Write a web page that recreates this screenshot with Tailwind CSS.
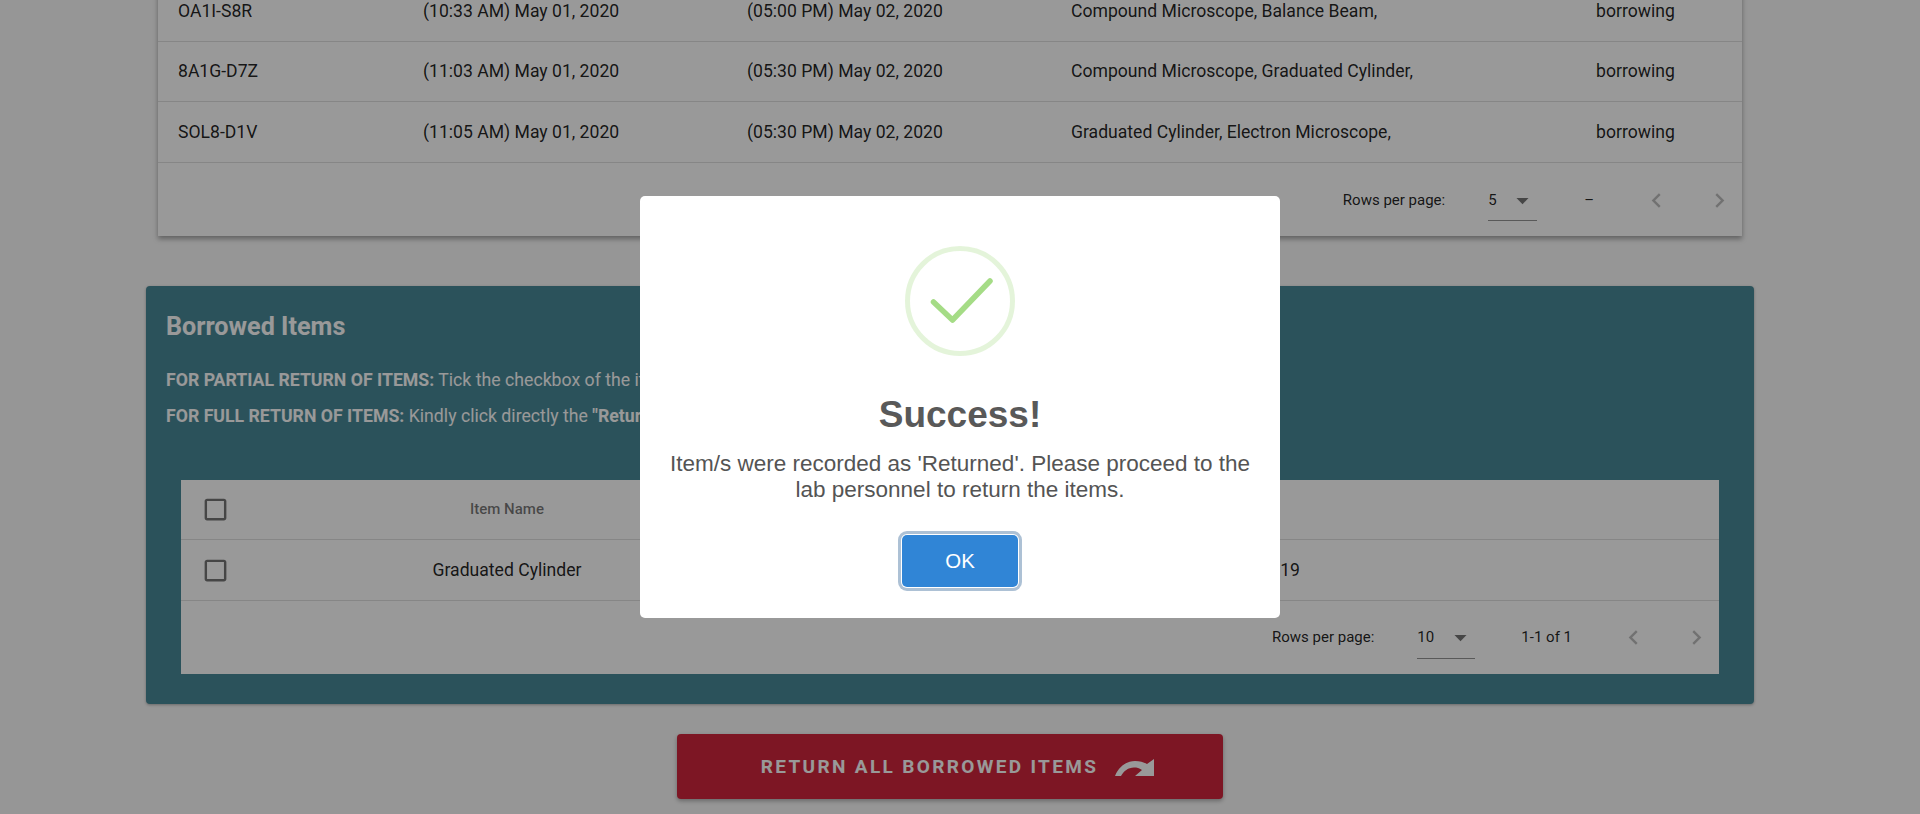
<!DOCTYPE html>
<html lang="en">

<head>
    <meta charset="UTF-8">
    <meta name="viewport" content="width=device-width, initial-scale=1.0">
    <title>Borrowed Items</title>
    <script src="https://cdn.jsdelivr.net/npm/@tailwindcss/browser@4"></script>
</head>

<body class="overflow-hidden">
    <div class="relative h-[814px] overflow-hidden bg-[#fafafa] font-['Roboto',sans-serif] text-black/87">

        <!-- Transactions table -->
        <div class="-mt-[19px] ml-[158px] w-[1584px] bg-white shadow-[0_3px_5px_rgba(0,0,0,0.35)]">
            <div class="grid grid-cols-[245px_324px_324px_525px_1fr] pl-[20px] h-[61px] items-center border-b border-black/12 text-[17.6px]">
                <div>OA1I-S8R</div>
                <div>(10:33 AM) May 01, 2020</div>
                <div>(05:00 PM) May 02, 2020</div>
                <div>Compound Microscope, Balance Beam,</div>
                <div>borrowing</div>
            </div>
            <div class="grid grid-cols-[245px_324px_324px_525px_1fr] pl-[20px] h-[60px] items-center border-b border-black/12 text-[17.6px]">
                <div>8A1G-D7Z</div>
                <div>(11:03 AM) May 01, 2020</div>
                <div>(05:30 PM) May 02, 2020</div>
                <div>Compound Microscope, Graduated Cylinder,</div>
                <div>borrowing</div>
            </div>
            <div class="grid grid-cols-[245px_324px_324px_525px_1fr] pl-[20px] h-[61px] items-center border-b border-black/12 text-[17.6px]">
                <div>SOL8-D1V</div>
                <div>(11:05 AM) May 01, 2020</div>
                <div>(05:30 PM) May 02, 2020</div>
                <div>Graduated Cylinder, Electron Microscope,</div>
                <div>borrowing</div>
            </div>
            <div class="flex items-center justify-end h-[73px] pt-[2px] pr-[8px] text-[15px]">
                <span>Rows per page:</span>
                <div class="ml-[43px] w-[49px] h-[40px] flex items-center justify-between border-b border-black/42">
                    <span>5</span>
                    <svg class="w-[29px] h-[29px] fill-black/54" viewBox="0 0 24 24"><path d="M7 10l5 5 5-5z"/></svg>
                </div>
                <span class="ml-[47px]">–</span>
                <svg class="ml-[48px] w-[29px] h-[29px] fill-black/26" viewBox="0 0 24 24"><path d="M15.41 7.41L14 6l-6 6 6 6 1.41-1.41L10.83 12z"/></svg>
                <svg class="ml-[34px] w-[29px] h-[29px] fill-black/26" viewBox="0 0 24 24"><path d="M10 6L8.59 7.41 13.17 12l-4.58 4.59L10 18l6-6z"/></svg>
            </div>
        </div>

        <!-- Borrowed items panel -->
        <div class="mt-[50px] ml-[146px] w-[1608px] h-[418px] rounded bg-[#498998] pt-[25px] shadow-[0_1px_3px_rgba(0,0,0,0.3)]">
            <h2 class="ml-[20px] text-[25.2px] font-bold leading-8 text-white">Borrowed Items</h2>
            <p class="ml-[20px] mt-[25px] text-[17.7px] leading-6 text-white whitespace-nowrap"><b>FOR PARTIAL RETURN OF ITEMS:</b> Tick the checkbox of the items</p>
            <p class="ml-[20px] mt-[12px] text-[17.7px] leading-6 text-white whitespace-nowrap"><b>FOR FULL RETURN OF ITEMS:</b> Kindly click directly the <b>"Return</b></p>

            <div class="mt-[52px] ml-[35px] w-[1538px] bg-white">
                <div class="grid grid-cols-[70px_512px_1fr] h-[60px] items-center border-b border-black/12">
                    <svg class="ml-[20px] w-[29px] h-[29px] fill-black/54" viewBox="0 0 24 24"><path d="M19 5v14H5V5h14m0-2H5c-1.1 0-2 .9-2 2v14c0 1.1.9 2 2 2h14c1.1 0 2-.9 2-2V5c0-1.1-.9-2-2-2z"/></svg>
                    <div class="text-center text-[15px] font-medium text-black/54">Item Name</div>
                </div>
                <div class="grid grid-cols-[70px_512px_537px_1fr] h-[61px] items-center border-b border-black/12 text-[17.6px]">
                    <svg class="ml-[20px] w-[29px] h-[29px] fill-black/54" viewBox="0 0 24 24"><path d="M19 5v14H5V5h14m0-2H5c-1.1 0-2 .9-2 2v14c0 1.1.9 2 2 2h14c1.1 0 2-.9 2-2V5c0-1.1-.9-2-2-2z"/></svg>
                    <div class="text-center">Graduated Cylinder</div>
                    <div class="text-right">19</div>
                </div>
                <div class="flex items-center justify-end h-[73px] pr-[8px] text-[15px]">
                    <span>Rows per page:</span>
                    <div class="ml-[43px] w-[58px] h-[42px] flex items-center justify-between border-b border-black/42">
                        <span>10</span>
                        <svg class="w-[29px] h-[29px] fill-black/54" viewBox="0 0 24 24"><path d="M7 10l5 5 5-5z"/></svg>
                    </div>
                    <span class="ml-[46px]">1-1 of 1</span>
                    <svg class="ml-[47px] w-[29px] h-[29px] fill-black/26" viewBox="0 0 24 24"><path d="M15.41 7.41L14 6l-6 6 6 6 1.41-1.41L10.83 12z"/></svg>
                    <svg class="ml-[34px] w-[29px] h-[29px] fill-black/26" viewBox="0 0 24 24"><path d="M10 6L8.59 7.41 13.17 12l-4.58 4.59L10 18l6-6z"/></svg>
                </div>
            </div>
        </div>

        <!-- Return button -->
        <button class="mt-[30px] ml-[677px] w-[546px] h-[65px] pl-[15px] pt-[2px] rounded flex items-center justify-center gap-[17px] bg-[#d0263c] text-white text-[19px] font-bold tracking-[2.35px] shadow-[0_2px_4px_rgba(0,0,0,0.3)]">
            <span>RETURN ALL BORROWED ITEMS</span>
            <svg class="w-[39px] h-[17px] fill-white" viewBox="0 0 39 17"><path d="M0 17C4 7 12 2 20 2C25 2 28 3 32 5L39 0V17H20L27 11C24 9 22 8.5 19 8.5C13 8.5 9 12 6 17Z"/></svg>
        </button>

        <!-- Overlay + alert -->
        <div class="absolute inset-0 flex items-center justify-center bg-black/40">
            <div class="w-[640px] h-[422px] rounded-[5px] bg-white flex flex-col items-center pt-[50px] font-['Liberation_Sans',sans-serif]">
                <svg class="w-[110px] h-[110px] shrink-0" viewBox="0 0 110 110">
                    <circle cx="55" cy="55" r="52.5" fill="none" stroke="#a5dc86" stroke-opacity="0.3" stroke-width="5"/>
                    <path d="M28.5 56L47.5 74L85 35" fill="none" stroke="#a5dc86" stroke-width="5.5" stroke-linecap="round" stroke-linejoin="round"/>
                </svg>
                <h2 class="mt-[37px] text-[37px] leading-[44px] font-bold text-[#595959]">Success!</h2>
                <p class="mt-[14px] px-[24px] text-center text-[22.5px] leading-[26px] text-[#545454]">Item/s were recorded as 'Returned'. Please proceed to the lab personnel to return the items.</p>
                <button class="mt-[32px] w-[116px] h-[52px] rounded-[5px] bg-[#3085d6] text-white text-[20.4px] shadow-[0_0_0_1px_#fff,0_0_0_4px_rgba(50,100,150,0.4)]">OK</button>
            </div>
        </div>
    </div>
</body>

</html>
